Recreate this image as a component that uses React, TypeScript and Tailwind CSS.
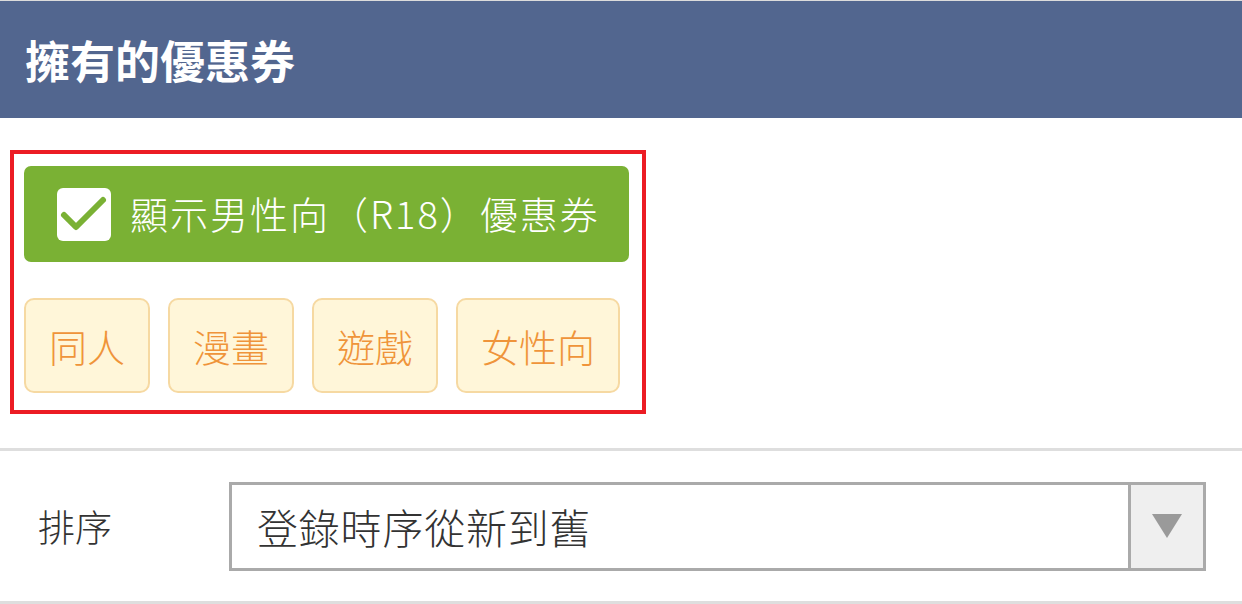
import React from "react";

const font = { fontFamily: '"Noto Sans CJK TC", "Noto Sans", sans-serif' };

function CheckBox() {
  return (
    <span className="flex h-[53px] w-[54px] shrink-0 items-center justify-center rounded-[6px] bg-white">
      <svg width="54" height="53" viewBox="0 0 54 53">
        <path d="M7 27 L19 39 L46 12" fill="none" stroke="#7ab134" strokeWidth="6" strokeLinecap="round" strokeLinejoin="round" />
      </svg>
    </span>
  );
}

export default function App() {
  const tags = ["同人", "漫畫", "遊戲", "女性向"];
  return (
    <div className="min-h-screen w-[1242px] bg-white" style={font}>
      <div className="h-px bg-[#dcdcdc]" />
      <header className="flex h-[117px] items-center bg-[#52668f] pl-[25px]">
        <h1 className="text-[45px] font-bold leading-none text-white">擁有的優惠券</h1>
      </header>

      <section className="pl-[10px] pt-[32px] pb-[34px]">
        <div className="w-[636px] border-4 border-[#ec1c24] px-[10px] pt-[12px] pb-[17px]">
          <button className="flex h-[96px] w-[605px] items-center gap-[19px] rounded-[7px] bg-[#7ab134] pl-[33px] text-[38px] font-light leading-none text-white">
            <CheckBox />
            <span className="mt-[-2px] tracking-[2px]">顯示男性向（R18）優惠券</span>
          </button>
          <div className="mt-[36px] flex gap-[18px]">
            {tags.map((t) => (
              <span
                key={t}
                className="flex h-[95px] items-center justify-center rounded-[10px] border-2 border-[#f6d9a2] bg-[#fff6d9] px-[23px] text-[38px] font-light leading-none text-[#ef943a]"
              >
                {t}
              </span>
            ))}
          </div>
        </div>
      </section>

      <div className="h-[3px] bg-[#dedede]" />
      <div className="flex h-[150px] items-center pl-[38px]">
        <span className="w-[191px] text-[37px] font-light leading-none text-[#333333]">排序</span>
        <div className="flex h-[89px] w-[977px] border-[3px] border-[#aaaaaa]">
          <div className="flex flex-1 items-center pl-[25px] text-[41px] font-light leading-none tracking-[0.8px] text-[#333333]">登錄時序從新到舊</div>
          <div className="flex w-[75px] items-center justify-center border-l-[3px] border-[#aaaaaa] bg-[#efefef]">
            <svg width="30" height="24" viewBox="0 0 30 24">
              <path d="M0 0 H30 L15 24 Z" fill="#9a9a9a" />
            </svg>
          </div>
        </div>
      </div>
      <div className="h-[3px] bg-[#dedede]" />
    </div>
  );
}
